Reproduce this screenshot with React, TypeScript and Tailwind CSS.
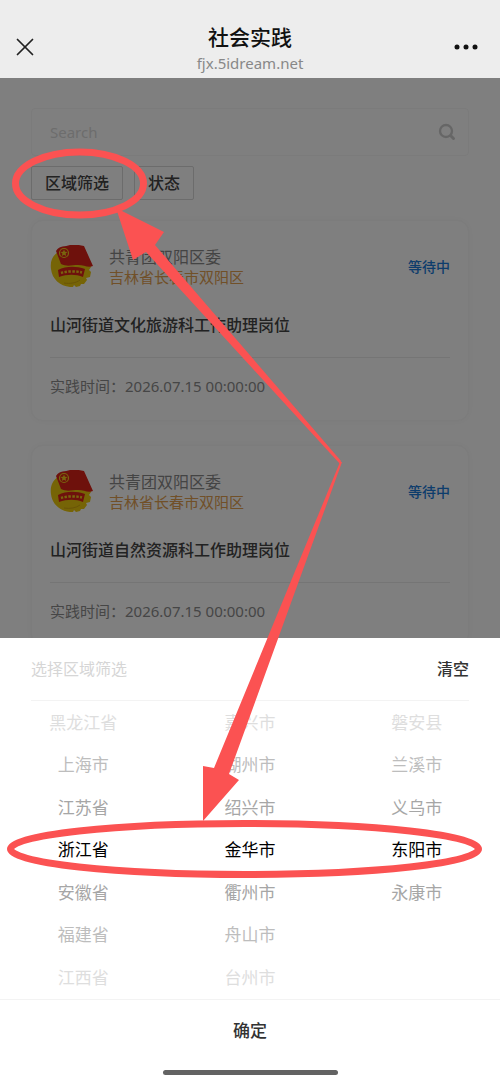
import { X } from 'lucide-react';

interface Post {
  org: string;
  region: string;
  status: string;
  title: string;
  time: string;
}

const posts: Post[] = [
  {
    org: '共青团双阳区委',
    region: '吉林省长春市双阳区',
    status: '等待中',
    title: '山河街道文化旅游科工作助理岗位',
    time: '2026.07.15 00:00:00',
  },
  {
    org: '共青团双阳区委',
    region: '吉林省长春市双阳区',
    status: '等待中',
    title: '山河街道自然资源科工作助理岗位',
    time: '2026.07.15 00:00:00',
  },
];

const columns = [
  { label: '省', items: ['黑龙江省', '上海市', '江苏省', '浙江省', '安徽省', '福建省', '江西省'] },
  { label: '市', items: ['嘉兴市', '湖州市', '绍兴市', '金华市', '衢州市', '舟山市', '台州市'] },
  { label: '区', items: ['磐安县', '兰溪市', '义乌市', '东阳市', '永康市'] },
];

// the further a row is from the middle, the lighter it gets
const rowColors = [
  'text-[#dedede]',
  'text-[#bdbdbd]',
  'text-[#a6a6a6]',
  'text-black',
  'text-[#a6a6a6]',
  'text-[#bdbdbd]',
  'text-[#dedede]',
];

const Emblem = () => (
  <svg viewBox="0 0 43 43" className="h-[43px] w-[43px] shrink-0" aria-hidden="true">
    <path
      d="M8 7C2 11 0 17 1 24c1 10 9 17 19 18h3l1-2 2 2 4-1 1-2 3 0 3-4-1-2 4-1 1-5-2-2 2-3-2-8L24 8Z"
      fill="#ecc80c"
    />
    <path d="M6 6C10 0 15 2 20 0c5-1 9 0 14 1l9 20c-5 2-9-1-15-1-6 0-11 2-17-1Z" fill="#dc2218" />
    <circle cx="14" cy="8" r="4.500" fill="none" stroke="#f2c81c" strokeWidth="1.200" />
    <path d="m14 4.500 1 2.300 2.500.2-1.900 1.600.6 2.500-2.200-1.300-2.200 1.300.6-2.500L10.500 7l2.500-.2Z" fill="#f2c81c" />
    <path d="M8 25c8-4 18-4 27-1l-2 8c-7-3-16-3-24 0Z" fill="#dc2218" />
    <path d="M11 28c6-2 15-2 21-.5" fill="none" stroke="#f2c81c" strokeWidth="2.500" strokeDasharray="2.400 1.400" />
    <path d="M14 38c6 1 12 0 16-3" fill="none" stroke="#d3a80c" strokeWidth="1" />
  </svg>
);

const SearchIcon = () => (
  <svg viewBox="0 0 18 18" className="h-[18px] w-[18px]" fill="none" stroke="#cdcdcd" strokeLinecap="round" aria-hidden="true">
    <circle cx="8" cy="8" r="6" strokeWidth="2.400" />
    <path d="m13 13 2.500 2.500" strokeWidth="3" />
  </svg>
);

const PostCard = ({ post }: { post: Post }) => (
  <article className="rounded-xl border border-[#f8f8f8] bg-white px-[18px] pt-6 pb-[22px] shadow-[0_0_8px_rgba(0,0,0,0.04)]">
    <div className="flex items-center">
      <Emblem />
      <div className="ml-4 flex-1">
        <p className="text-base leading-5 text-[#888]">{post.org}</p>
        <p className="text-[15px] leading-5 text-[#e2a050]">{post.region}</p>
      </div>
      <span className="text-sm font-medium text-[#1a7ad8]">{post.status}</span>
    </div>
    <h2 className="mt-[25px] text-base leading-6 font-medium text-[#444]">{post.title}</h2>
    <p className="mt-5 border-t border-[#ebebeb] pt-4 text-[15px] leading-6 text-[#8c8c8c]">
      实践时间：{post.time}
    </p>
  </article>
);

const FilterButton = ({ children }: { children: string }) => (
  <button
    type="button"
    className="rounded-xs border border-[#d8d8d8] px-[13px] py-1 text-base leading-6 font-medium text-[#444]"
  >
    {children}
  </button>
);

// hand-drawn style marks pointing from the filter button to the picked region
const Annotations = () => (
  <svg
    viewBox="0 0 500 1081"
    preserveAspectRatio="none"
    className="pointer-events-none absolute inset-0 h-full w-full"
    aria-hidden="true"
  >
    <g fill="none" stroke="#fb5252" strokeWidth="7">
      <ellipse cx="79.500" cy="183.500" rx="64" ry="31.500" />
      <ellipse cx="244.500" cy="849" rx="234" ry="25.500" />
    </g>
    <path d="M116 208 164 232 155 245 341 461 340 464 146 252 133 260Z" fill="#fb5252" />
    <path d="M342 462 340 462 214 768 203 766 203 821 239 780 229 774Z" fill="#fb5252" />
  </svg>
);

export default function App() {
  return (
    <div className="relative flex h-screen flex-col overflow-hidden bg-white font-['Noto_Sans','Noto_Sans_CJK_SC',sans-serif]">
      <header className="flex h-[78px] shrink-0 items-end justify-between bg-[#ededed] px-2">
        <button type="button" aria-label="关闭" className="mb-3.5 flex h-[34px] w-[34px] items-center justify-center">
          <X className="h-[30px] w-[30px] text-[#222]" strokeWidth={1.400} />
        </button>
        <div className="pb-[5px] text-center">
          <h1 className="text-[21px] leading-8 font-medium text-[#111]">社会实践</h1>
          <p className="text-[15px] leading-5 text-[#888]">fjx.5idream.net</p>
        </div>
        <button type="button" aria-label="更多" className="mb-3.5 flex h-[34px] w-[34px] items-center">
          <svg viewBox="0 0 24 6" className="-ml-1 h-1.5 w-6" aria-hidden="true" fill="#111">
            <circle cx="3" cy="3" r="2.500" />
            <circle cx="12" cy="3" r="2.500" />
            <circle cx="21" cy="3" r="2.500" />
          </svg>
        </button>
      </header>

      <main className="relative min-h-0 flex-1 overflow-hidden bg-white">
        <div className="px-[31px] pt-[30px]">
          <label className="flex h-12 items-center rounded border border-[#f6f6f6] bg-white pr-3 pl-[18px]">
            <input
              type="text"
              placeholder="Search"
              aria-label="Search"
              className="min-w-0 flex-1 text-[15px] placeholder:text-[#dadada] focus:outline-none"
            />
            <SearchIcon />
          </label>
          <div className="mt-2.5 flex gap-[11px]">
            <FilterButton>区域筛选</FilterButton>
            <FilterButton>状态</FilterButton>
          </div>
          <div className="mt-5 flex flex-col gap-6">
            {posts.map((post) => (
              <PostCard key={post.title} post={post} />
            ))}
          </div>
        </div>
        <div className="absolute inset-0 bg-black/50" />
      </main>

      <section className="shrink-0 bg-white" aria-label="选择区域筛选">
        <div className="mx-[31px] flex h-[63px] items-center justify-between border-b border-[#f3f3f3] text-base">
          <span className="text-[#d6d6d6]">选择区域筛选</span>
          <button type="button" className="font-medium text-[#333]">清空</button>
        </div>
        <div className="grid h-[298px] grid-cols-3">
          {columns.map((column) => (
            <ul key={column.label} aria-label={column.label} className="grid grid-rows-7">
              {column.items.map((item, index) => (
                <li key={item} className={`flex items-center justify-center text-[17px] ${rowColors[index]}`}>
                  {item}
                </li>
              ))}
            </ul>
          ))}
        </div>
        <div className="flex flex-col items-center border-t border-[#f3f3f3] pb-1.5">
          <button type="button" className="h-[62px] w-full text-[17px] font-medium text-[#333]">
            确定
          </button>
          <div className="mt-2 h-[5px] w-[175px] rounded-full bg-[#636363]" />
        </div>
      </section>

      <Annotations />
    </div>
  );
}
